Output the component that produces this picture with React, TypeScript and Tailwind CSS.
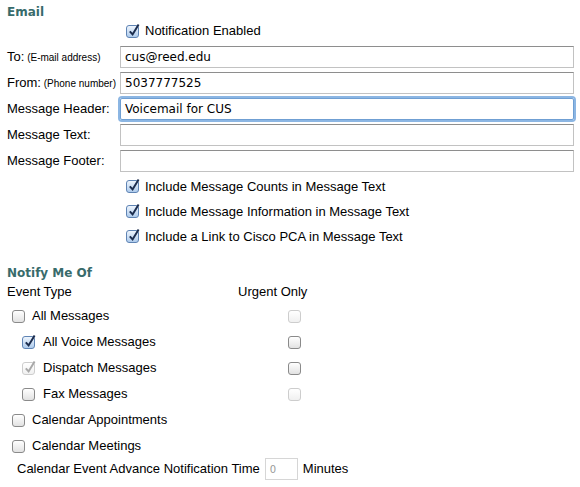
import React from 'react'

function Box({ checked, disabled }: { checked?: boolean; disabled?: boolean }) {
  const frame = disabled
    ? 'border-[#cdcdcd] bg-gradient-to-b from-white to-[#f0f0f0]'
    : checked
      ? 'border-[#5f84b4] bg-gradient-to-b from-[#eef5fd] to-[#aecbec]'
      : 'border-[#8a8a8a] bg-gradient-to-b from-white to-[#e2e2e2]'
  return (
    <span className={`relative inline-block w-[13px] h-[13px] rounded-[3px] border shrink-0 ${frame}`}>
      {checked && (
        <svg className="absolute left-[1px] top-[-3px]" width="12" height="14" viewBox="0 0 12 14">
          <path
            d="M1.8 8.4 L4.6 11.4 L10.6 1.6"
            fill="none"
            stroke={disabled ? '#a8a8a8' : '#1c2d4e'}
            strokeWidth="2"
          />
        </svg>
      )}
    </span>
  )
}

function Field({ label, hint, value, focused }: { label: string; hint?: string; value?: string; focused?: boolean }) {
  return (
    <div className="flex items-center h-[22px]">
      <div className="w-[113px] shrink-0 whitespace-nowrap">
        {label}
        {hint && <span className="text-[10px]"> {hint}</span>}
      </div>
      <div
        className={
          focused
            ? 'w-[454px] h-[22px] border border-[#6f9fd3] rounded-[2px] shadow-[0_0_0_2px_#8cb6e3] flex items-center px-[4px]'
            : 'w-[454px] h-[22px] border border-[#c2c2c2] border-t-[#8e8e8e] flex items-center px-[4px]'
        }
      >
        <span className="font-['DejaVu_Sans',sans-serif] text-[12px] text-black">{value}</span>
      </div>
    </div>
  )
}

function Check({ label, checked }: { label: string; checked?: boolean }) {
  return (
    <div className="flex items-center h-[25px] pl-[119px] gap-[6px]">
      <Box checked={checked} />
      <span>{label}</span>
    </div>
  )
}

function EventRow({ label, indent, checked, disabled, urgent }: { label: string; indent?: boolean; checked?: boolean; disabled?: boolean; urgent?: 'on' | 'off' | 'none' }) {
  return (
    <div className="flex items-center h-[26px]">
      <div className={indent ? 'w-[281px] flex items-center pl-[15px] gap-[8px]' : 'w-[281px] flex items-center pl-[5px] gap-[7px]'}>
        <Box checked={checked} disabled={disabled} />
        <span>{label}</span>
      </div>
      {urgent && urgent !== 'none' && <Box disabled={urgent === 'off'} />}
    </div>
  )
}

export default function App() {
  return (
    <div className="w-[580px] h-[487px] bg-white overflow-hidden font-['Liberation_Sans',Arial,sans-serif] text-[13px] text-black pl-[7px] pt-[4px]">
      <h2 className="font-['DejaVu_Sans',Verdana,sans-serif] font-bold text-[12px] leading-[17px] text-[#386b6b]">Email</h2>

      <div className="flex items-center h-[20px] pl-[119px] gap-[6px]">
        <Box checked />
        <span>Notification Enabled</span>
      </div>

      <div className="flex flex-col gap-[4px] mt-[5px]">
        <Field label="To:" hint="(E-mail address)" value="cus@reed.edu" />
        <Field label="From:" hint="(Phone number)" value="5037777525" />
        <Field label="Message Header:" value="Voicemail for CUS" focused />
        <Field label="Message Text:" />
        <Field label="Message Footer:" />
      </div>

      <div className="mt-[2px]">
        <Check label="Include Message Counts in Message Text" checked />
        <Check label="Include Message Information in Message Text" checked />
        <Check label="Include a Link to Cisco PCA in Message Text" checked />
      </div>

      <h2 className="mt-[15px] font-['DejaVu_Sans',Verdana,sans-serif] font-bold text-[12px] leading-[18px] text-[#386b6b]">Notify Me Of</h2>

      <div className="flex items-center h-[18px] mt-[1px]">
        <span className="w-[231px] shrink-0">Event Type</span>
        <span>Urgent Only</span>
      </div>

      <div className="mt-[2px]">
        <EventRow label="All Messages" urgent="off" />
        <EventRow label="All Voice Messages" indent checked urgent="on" />
        <EventRow label="Dispatch Messages" indent checked disabled urgent="on" />
        <EventRow label="Fax Messages" indent urgent="off" />
        <EventRow label="Calendar Appointments" />
        <EventRow label="Calendar Meetings" />
      </div>

      <div className="flex items-center h-[22px] pl-[10px] gap-[5px] mt-[-1px]">
        <span>Calendar Event Advance Notification Time</span>
        <div className="w-[33px] h-[22px] border border-[#d6d6d6] flex items-center px-[4px]">
          <span className="font-['DejaVu_Sans',sans-serif] text-[10px] text-[#9a9a9a]">0</span>
        </div>
        <span>Minutes</span>
      </div>
    </div>
  )
}
